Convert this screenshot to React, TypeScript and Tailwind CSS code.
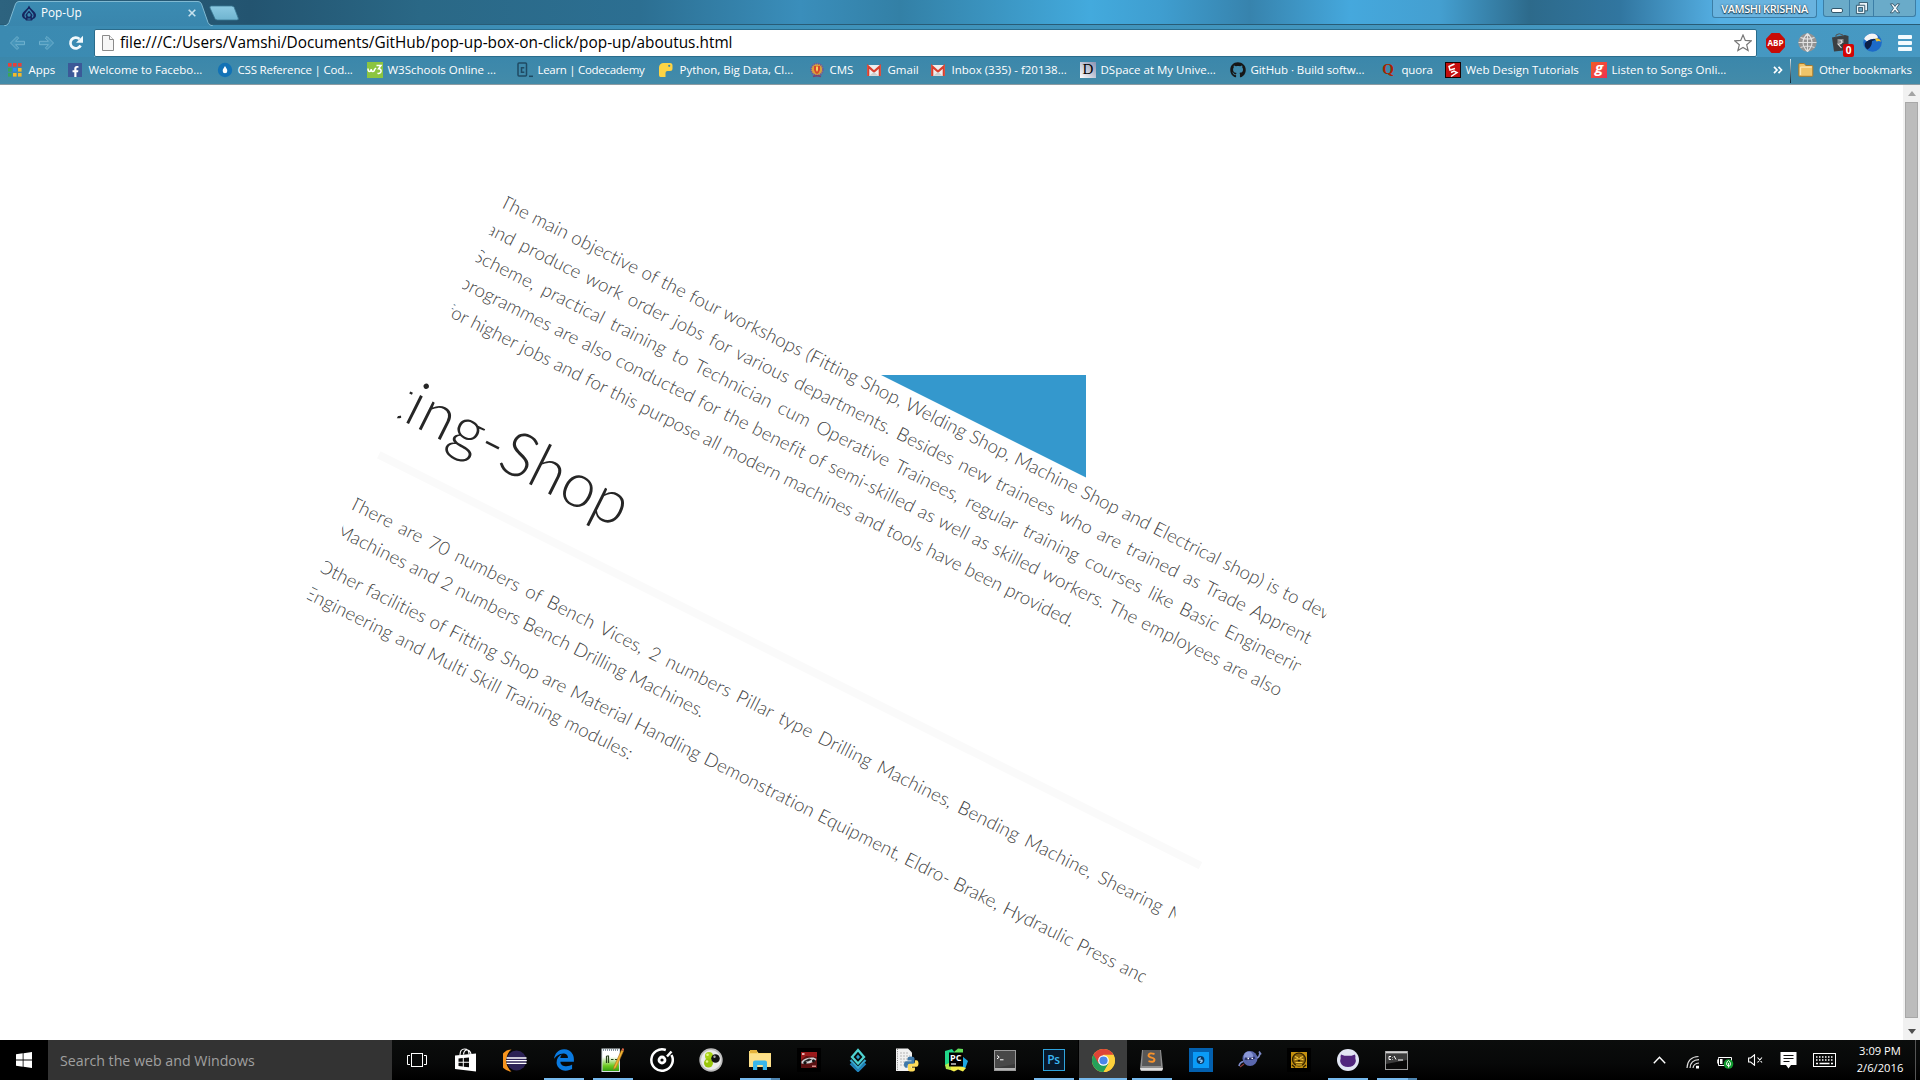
import type { ReactNode } from 'react';
import { FaFacebookF, FaGithub, FaEdgeLegacy } from 'react-icons/fa';

const UI = "font-['Open_Sans','Noto_Sans',sans-serif]";

/* ---------- Bookmark icons ---------- */

const AppsIcon = () => (
  <svg width="14" height="14" viewBox="0 0 14 14">
    {['#e8403a', '#e8403a', '#e8403a', '#3aa757', '#2f8df0', '#f4b92a', '#3aa757', '#f4b92a', '#f4b92a'].map((c, i) => (
      <rect key={i} x={(i % 3) * 5} y={Math.floor(i / 3) * 5} width="3.6" height="3.6" fill={c} />
    ))}
  </svg>
);
const FacebookIcon = () => (
  <span className="flex h-[14px] w-[14px] items-end justify-center bg-[#3b5998] text-white">
    <FaFacebookF size={11} />
  </span>
);
const CssIcon = () => (
  <svg width="16" height="16" viewBox="0 0 16 16">
    <circle cx="8" cy="8" r="7.2" fill="#1272b6" />
    <path d="M8 4c1 1.8 2.3 3 2.3 4.9a2.3 2.3 0 0 1-4.6 0C5.700 7 7 5.800 8 4z" fill="#fff" />
  </svg>
);
const W3Icon = () => (
  <svg width="16" height="16" viewBox="0 0 16 16">
    <rect width="16" height="16" fill="#8cc540" />
    <path d="M1 6.500q0 3 1.500 3T4.200 7q0 2.500 1.600 2.500T7.500 7.500L9 6M9.500 3.500H14l-2.500 3.300q3 .2 2.500 2.700-.7 2.500-3.500 1.700" fill="none" stroke="#fff" strokeWidth="1.500" />
  </svg>
);
const CodecademyIcon = () => (
  <svg width="16" height="16" viewBox="0 0 16 16" fill="none" stroke="#1f4a63">
    <rect x="1" y="1" width="8.500" height="13" rx="1" strokeWidth="1.500" />
    <path d="M7.300 5.800H4.500v4.500h2.800" strokeWidth="1.500" />
    <path d="M12 14.300h4" strokeWidth="1.500" />
  </svg>
);
const PythonYellowIcon = () => (
  <svg width="16" height="16" viewBox="0 0 16 16">
    <path d="M0 5.500A4.500 4.500 0 0 1 4.500 1H11q2.500 0 2.500 2.500v3Q13.500 9 11 9H8.500Q6.500 9 6.500 11v4H1.500Q0 15 0 13z" fill="#fdd443" />
    <circle cx="10.200" cy="3.800" r="1.100" fill="#3d88aa" />
  </svg>
);
const CmsIcon = () => (
  <svg width="16" height="16" viewBox="0 0 16 16">
    <circle cx="8" cy="7.500" r="6" fill="#d8a03a" stroke="#6b5aa0" strokeWidth="1.700" strokeDasharray="1.500 .7" />
    <path d="M5 4h6v4q-1 3-3 4-2-1-3-4z" fill="#d4472c" />
    <path d="M7 4.500h2V8L8 10 7 8z" fill="#f7d060" />
    <path d="M4 14.500q4-1.500 8 0" stroke="#7d3f6a" strokeWidth="1.500" fill="none" />
  </svg>
);
const GmailIcon = () => (
  <svg width="14" height="16" viewBox="0 0 14 16">
    <rect y="3" width="14" height="11" rx="1" fill="#eee" />
    <path d="M1.200 14V4.500L7 9.500l5.800-5V14" fill="none" stroke="#d9402f" strokeWidth="2.200" />
    <path d="M2.300 13.800 7 10l4.700 3.800z" fill="#cfcfcf" />
  </svg>
);
const DspaceIcon = () => (
  <span className="flex h-4 w-4 items-center justify-center bg-gradient-to-tr from-white to-[#8b92b0] font-['Liberation_Serif',serif] text-[15px] leading-none text-black">D</span>
);
const QuoraIcon = () => (
  <span className="flex h-4 w-[14px] items-center justify-center font-['Liberation_Serif',serif] text-[15px] font-bold leading-none text-[#a82400]">Q</span>
);
const WebDesignIcon = () => (
  <svg width="16" height="16" viewBox="0 0 16 16">
    <rect x=".5" y=".5" width="15" height="15" fill="#c40d0d" stroke="#190000" />
    <path d="M9.500 2 4 4.500l1 3.500 5-1.500M6 10.500l3-1.500 3 1.500-6 4" fill="none" stroke="#fff" strokeWidth="1.500" />
  </svg>
);
const GaanaIcon = () => (
  <span className="flex h-4 w-4 items-center justify-center bg-gradient-to-br from-[#f15a22] to-[#ee2c4f] pb-1 font-['Open_Sans',sans-serif] text-[15px] font-bold italic leading-none text-white">g</span>
);
const FolderIcon = () => (
  <svg width="16" height="16" viewBox="0 0 16 16">
    <path d="M.8 13.500V2.500q0-1 1-1h4.500l1.500 2h6q1 0 1 1v9q0 .8-.8.8H1.600q-.8 0-.8-.8z" fill="#f0c469" stroke="#a77a2b" />
    <path d="M2.500 13V6q0-.8.8-.8h10.500" fill="none" stroke="#fbe6b3" strokeWidth="1.300" />
  </svg>
);

type Bookmark = { label: string; icon: ReactNode; slot: string; track?: string };
const bookmarks: Bookmark[] = [
  { label: 'Apps', icon: <AppsIcon />, slot: 'w-[60px]' },
  { label: 'Welcome to Facebo...', icon: <FacebookIcon />, slot: 'w-[149px]' },
  { label: 'CSS Reference | Cod...', icon: <CssIcon />, slot: 'w-[150px]', track: 'tracking-[-0.2px]' },
  { label: 'W3Schools Online ...', icon: <W3Icon />, slot: 'w-[150px]' },
  { label: 'Learn | Codecademy', icon: <CodecademyIcon />, slot: 'w-[142px]', track: 'tracking-[-0.3px]' },
  { label: 'Python, Big Data, Cl...', icon: <PythonYellowIcon />, slot: 'w-[150px]' },
  { label: 'CMS', icon: <CmsIcon />, slot: 'w-[58px]' },
  { label: 'Gmail', icon: <GmailIcon />, slot: 'w-[64px]' },
  { label: 'Inbox (335) - f20138...', icon: <GmailIcon />, slot: 'w-[149px]' },
  { label: 'DSpace at My Unive...', icon: <DspaceIcon />, slot: 'w-[150px]' },
  { label: 'GitHub · Build softw...', icon: <FaGithub size={16} color="#161616" />, slot: 'w-[151px]', track: 'tracking-[-0.07px]' },
  { label: 'quora', icon: <QuoraIcon />, slot: 'w-[64px]', track: 'tracking-[-0.2px]' },
  { label: 'Web Design Tutorials', icon: <WebDesignIcon />, slot: 'w-[146px]' },
  { label: 'Listen to Songs Onli...', icon: <GaanaIcon />, slot: 'w-[182px]' },
];

/* ---------- Browser chrome ---------- */

const TabStrip = () => (
  <div className="flex h-[25px] items-start bg-[linear-gradient(90deg,#2d637f_0px,#235470_250px,#2a6886_420px,#2c6f92_640px,#3a8ebb_800px,#3380a6_900px,#43aadd_1090px,#3f9ed0_1160px,#3783ad_1250px,#45a8dd_1350px,#449fd0_1440px,#2d6a8b_1530px,#3176a0_1620px,#55b0e4_1720px,#5bb2e3_1920px)] shadow-[inset_0_-1px_0_#285c76]">
    <div className="relative h-[25px] w-[205px]">
      <svg className="absolute left-0 top-0" width="245" height="26" viewBox="0 0 245 26">
        <defs>
          <linearGradient id="tab" x1="0" y1="0" x2="0" y2="1">
            <stop offset="0" stopColor="#3b8bb2" />
            <stop offset="1" stopColor="#3986ad" />
          </linearGradient>
          <linearGradient id="newtab" x1="0" y1="0" x2="0" y2="1">
            <stop offset="0" stopColor="#8cc9e2" />
            <stop offset="1" stopColor="#6fb4d0" />
          </linearGradient>
        </defs>
        <path d="M4 26q4-.5 5-3.500L15.500 4q1-2.500 3.500-2.500h179q2.500 0 3.500 2.500l6.500 18.500q1 3 5 3.500" fill="url(#tab)" stroke="#7fb9d2" />
        <path d="M210 8q-.7-2 1.500-2h20q2 0 2.700 1.500l4 10.500q.7 2-1.500 2h-19q-2 0-2.800-1.500z" fill="url(#newtab)" stroke="#3a7894" strokeWidth=".8" />
      </svg>
      <div className="relative flex h-[25px] items-center pl-[22px] text-white">
        <svg width="14" height="16" viewBox="0 0 14 16">
          <path d="M7 .5q1 2.500 3.500 4.500Q14 8 14 10q0 3-3 4l-1 1.500H4L3 14q-3-1-3-4 0-2 3.500-5Q6 3 7 .5z" fill="#16275f" />
          <path d="M7 4.500 3.300 9q-1 2 .7 3.500M7 4.500 10.700 9q1 2-.7 3.500M7 8v2M5.500 14h3" stroke="#3b8ab1" strokeWidth="1.200" fill="none" />
          <circle cx="7" cy="10" r="1.700" fill="#3b8ab1" />
        </svg>
        <span className="ml-[5px] text-[11.7px]">Pop-Up</span>
        <svg className="ml-[106px]" width="8" height="8" viewBox="0 0 8 8" stroke="#c6e2ee" strokeWidth="1.600">
          <path d="M.7.7l6.600 6.600M7.300.7.7 7.300" />
        </svg>
      </div>
    </div>
    <div className="ml-auto mr-[6px] h-[18px] w-[105px] rounded-b-[3px] border border-t-0 border-[#3c7ea6] bg-[#69b3df] text-center text-[10.900px] font-semibold leading-[18px] tracking-[-0.35px] text-white [text-shadow:0_0_2px_#1c3a4c,0_1px_1px_#1c3a4c]">
      VAMSHI KRISHNA
    </div>
    <div className="mr-[4px] flex h-[17px] w-[93px] divide-x divide-[#3c7ea6] rounded-b-[3px] border border-t-0 border-[#3c7ea6] bg-[#6aabc9]">
      <div className="flex w-[26px] items-center justify-center pt-1">
        <div className="h-[5px] w-3 rounded-[2px] border border-[#31566b] bg-white" />
      </div>
      <div className="-ml-px flex w-[25px] items-center justify-center">
        <svg width="13" height="13" viewBox="0 0 14 14" stroke="#31566b" fill="#e9f3f8">
          <path d="M4.500.5h9v9h-3v3h-9v-9h3z" />
          <path d="M4.500 3.500h6v6" fill="none" />
          <rect x="4" y="6" width="4" height="4" fill="#6aabc9" />
        </svg>
      </div>
      <div className="flex flex-1 items-center justify-center">
        <svg width="12" height="11" viewBox="0 0 12 11">
          <path d="M1.500.8h2.600L6 3.400 7.900.8h2.600L7.500 5.300l3.200 4.500H8L6 7.200 4 9.800H1.300l3.200-4.500z" fill="#f4f9fc" stroke="#31566b" strokeWidth=".9" />
        </svg>
      </div>
    </div>
  </div>
);

const Arrow = ({ flip }: { flip?: boolean }) => (
  <svg className={flip ? '-scale-x-100' : ''} width="17" height="16" viewBox="0 0 17 16">
    <path d="M8 1.500 1.500 8 8 14.500l1.600-1.600L6.500 9.700h9V6.300h-9l3.100-3.200z" fill="#4796bb" stroke="#6fb0cd" />
  </svg>
);

const Toolbar = () => (
  <div className="flex h-8 items-center bg-[linear-gradient(90deg,#3b8ab1,#3f93bb_50%,#4799c3)] pt-[3px]">
    <div className="flex w-[94px] items-center pl-[9px]">
      <Arrow />
      <span className="ml-[12px] flex"><Arrow flip /></span>
      <svg className="ml-[13px]" width="16" height="16" viewBox="0 0 16 16">
        <path d="M12.600 10.500A5.400 5.400 0 1 1 11.500 4" fill="none" stroke="#f2f9fc" strokeWidth="2.700" />
        <path d="M15 .8v7H8z" fill="#f2f9fc" />
      </svg>
    </div>
    <div className="flex h-[28px] w-[1663px] items-center rounded-[2px] border border-[#2a6c8c] bg-white pl-[7px] pr-1 shadow-[0_1px_0_#7db8d2]">
      <svg width="12" height="16" viewBox="0 0 12 16" fill="#f7f7f7" stroke="#8b8b8b">
        <path d="M.5.5h7l4 4v11H.5z" />
        <path d="M7.500.5v4h4" />
      </svg>
      <span className="ml-[6px] text-[15.38px] text-black">file:///C:/Users/Vamshi/Documents/GitHub/pop-up-box-on-click/pop-up/aboutus.html</span>
      <svg className="ml-auto" width="18" height="18" viewBox="0 0 18 18">
        <path d="M9 1l2.300 5.400 5.900.5-4.500 3.900 1.400 5.700L9 13.500l-5.100 3 1.400-5.700L.8 6.900l5.900-.5z" fill="#fff" stroke="#777" strokeWidth="1.200" />
      </svg>
    </div>
    <div className="ml-[9px] flex flex-1 items-center">
      <svg width="19" height="20" viewBox="0 0 19 20">
        <path d="M5.500 0h8L19 6v8l-5.500 6h-8L0 14V6z" fill="#c80b06" />
        <text x="9.500" y="13.300" fontSize="8.500" fontWeight="700" fill="#fff" textAnchor="middle" fontFamily="Open Sans" textLength="16" lengthAdjust="spacingAndGlyphs">ABP</text>
      </svg>
      <svg className="ml-[13px]" width="19" height="19" viewBox="0 0 19 19">
        <circle cx="9.500" cy="9.500" r="9.200" fill="#929292" />
        <path d="M9.500.5v18M.5 9.500h18M2.500 4.500q7 3 14 0M2.500 14.500q7-3 14 0M9.500.5q-9 9 0 18M9.500.5q9 9 0 18" fill="none" stroke="#e2e2e2" strokeWidth="1.100" />
      </svg>
      <div className="relative ml-[15px] h-[19px] w-[17px]">
        <svg width="17" height="19" viewBox="0 0 17 19">
          <path d="M0 4.500 13 2l3.500 1v14L2 18.500z" fill="#3b3f42" />
          <path d="M4 4.500V2q3-2.500 7 0v1.500" fill="none" stroke="#555" />
          <path d="M5.500 7h6M5.500 9h6M6 7q4 0 4 2t-4 2l3.500 4" fill="none" stroke="#ddd" strokeWidth="1.100" />
        </svg>
        <span className="absolute -bottom-[5px] left-[11px] h-[13px] w-[11px] rounded-[2px] bg-[#d40404] text-center text-[10px] font-bold leading-[13px] text-white">0</span>
      </div>
      <svg className="ml-[14px]" width="19" height="19" viewBox="0 0 19 19">
        <circle cx="9.500" cy="9.500" r="9.300" fill="#1d6ac9" />
        <path d="M1 6q2-5 8-5.500 5 0 6 4l-2 1.500q-5-1-9 2.500z" fill="#f5f5f5" />
        <path d="M2 10q4-4.500 11-4-1 1.500-4 2Q9 14 4.500 16.500 1 14 2 10z" fill="#0d2048" />
        <path d="M12 5.500q4-1 6 3-2-.8-4.500 0z" fill="#f2c230" />
      </svg>
      <svg className="ml-[16px]" width="14" height="16" viewBox="0 0 14 16" fill="#f4fbfe">
        <rect y="0" width="14" height="4" rx="1" />
        <rect y="6" width="14" height="4" rx="1" />
        <rect y="12" width="14" height="4" rx="1" />
      </svg>
    </div>
  </div>
);

const BookmarksBar = () => (
  <div className="flex h-[28px] items-center border-b border-[#8c9ba2] bg-[linear-gradient(180deg,#3b87ab,#438ba9)] pb-[2px] pl-2 text-[11.5px] text-white">
    {bookmarks.map((b) => (
      <div key={b.label} className={`flex shrink-0 items-center whitespace-nowrap ${b.slot}`}>
        <span className="flex w-4 shrink-0">{b.icon}</span>
        <span className={`ml-[4.500px] ${b.track ?? ''}`}>{b.label}</span>
      </div>
    ))}
    <svg width="10" height="8" viewBox="0 0 10 8" fill="none" stroke="#fff" strokeWidth="1.700">
      <path d="M1 .8 4 4 1 7.200M5.500.8l3 3.200-3 3.200" />
    </svg>
    <div className="ml-[7px] mt-[2px] h-[24px] w-px bg-gradient-to-b from-white/80 to-[#0d2430]" />
    <span className="ml-[7px] flex"><FolderIcon /></span>
    <span className="ml-[5px] tracking-[-0.1px] whitespace-nowrap">Other bookmarks</span>
  </div>
);

/* ---------- Page ---------- */

const Line = ({ w, children }: { w: string; children: string }) => (
  <div className={`whitespace-nowrap text-justify [text-align-last:justify] ${w}`}>{children}</div>
);
const LastLine = ({ track, children }: { track: string; children: string }) => (
  <div className={`whitespace-nowrap ${track}`}>{children}</div>
);

const Page = () => (
  <div className="relative flex-1 overflow-hidden bg-white">
    <div className="absolute left-[834px] top-[290px] h-[110px] w-[252px] bg-[#3498cd]" />
    <div className="absolute left-[510.9px] top-[105.1px] h-[500px] w-[919px] origin-top-left rotate-[26.565deg] overflow-hidden bg-white font-['Lato',sans-serif] text-[18.6px] font-light leading-[30.1px] text-[#3f3f3f] [font-variant-ligatures:none]">
      <div className="-ml-1 -mt-[1.8px] tracking-[0.14px]">
        <Line w="w-[926px] tracking-[0.07px]">The main objective of the four workshops (Fitting Shop, Welding Shop, Machine Shop and Electrical shop) is to dev</Line>
        <Line w="w-[920px]">and produce work order jobs for various departments. Besides new trainees who are trained as Trade Apprent</Line>
        <Line w="w-[926.500px]">Scheme, practical training to Technician cum Operative Trainees, regular training courses like Basic Engineerin</Line>
        <Line w="w-[917px]">programmes are also conducted for the benefit of semi-skilled as well as skilled workers. The employees are also</Line>
        <LastLine track="tracking-[0.04px]">for higher jobs and for this purpose all modern machines and tools have been provided.</LastLine>
      </div>
      <h1 className="mt-[49.500px] flex w-[247px] justify-end whitespace-nowrap text-[62px] leading-[66px] tracking-[0.5px] text-[#262626]">
        <span>Fitting-Shop</span>
      </h1>
      <div className="mt-[27.8px] h-2 bg-[#fafafa]" />
      <div className="-ml-1 mt-[35px] tracking-[0.2px]">
        <Line w="w-[932.500px]">There are 70 numbers of Bench Vices, 2 numbers Pillar type Drilling Machines, Bending Machine, Shearing M</Line>
        <LastLine track="tracking-[0.115px]">Machines and 2 numbers Bench Drilling Machines.</LastLine>
      </div>
      <div className="-ml-1 mt-[10px]">
        <Line w="w-[926.500px] tracking-[0.11px]">Other facilities of Fitting Shop are Material Handling Demonstration Equipment, Eldro- Brake, Hydraulic Press and</Line>
        <LastLine track="tracking-[0.21px]">Engineering and Multi Skill Training modules:</LastLine>
      </div>
    </div>
  </div>
);

const Scrollbar = () => (
  <div className="flex w-[17px] flex-col items-center bg-[#f1f1f1]">
    <div className="flex h-[17px] items-center">
      <svg width="8" height="5" viewBox="0 0 8 5" fill="#a3a3a3"><path d="M4 0l4 5H0z" /></svg>
    </div>
    <div className="w-[13px] flex-1 border border-[#a8a8a8] bg-[#bcbcbc]" />
    <div className="flex h-[22px] items-center pt-[4px]">
      <svg width="8" height="5" viewBox="0 0 8 5" fill="#505050"><path d="M4 5l4-5H0z" /></svg>
    </div>
  </div>
);

/* ---------- Taskbar ---------- */

const TaskView = () => (
  <svg width="20" height="15" viewBox="0 0 20 15" fill="none" stroke="#fff"><rect x="4.500" y=".5" width="11" height="13" /><path d="M3 2.500H.5v9H3M17 2.500h2.500v9H17" /></svg>
);
const Store = () => (
  <svg width="21" height="24" viewBox="0 0 21 24">
    <path d="M0 7.500 21 5.500v18L0 21z" fill="#fff" />
    <path d="M5 7q0-6 4.500-6T14 6M8.500 6.500Q9 2 12 2t4 4" fill="none" stroke="#fff" strokeWidth="1.200" />
    <path d="M3.500 10.500l4.300-.4v3.700H3.500zM8.800 10l5.200-.5v4.300H8.800zM3.500 14.800h4.300v3.800l-4.300-.5zM8.800 14.800H14v4.500l-5.200-.6z" fill="#0a0a0a" />
  </svg>
);
const Eclipse = () => (
  <svg width="24" height="23" viewBox="0 0 24 23">
    <path d="M8.500.5A11 11 0 0 0 8.500 22.500 14 14 0 0 1 8.500.5z" fill="#f7941e" />
    <circle cx="13.500" cy="11.500" r="10" fill="#2c2255" />
    <path d="M3.500 9h20M3.200 11.700h20.600M3.500 14.400h20" stroke="#fff" strokeWidth="1.300" />
  </svg>
);
const NotepadPP = () => (
  <svg width="23" height="24" viewBox="0 0 23 24">
    <defs><linearGradient id="npp" x1="0" y1="0" x2="0" y2="1"><stop offset=".35" stopColor="#fff" /><stop offset=".75" stopColor="#6cc820" /><stop offset="1" stopColor="#2e9a10" /></linearGradient></defs>
    <rect x="1" y="1" width="17.500" height="22.500" fill="url(#npp)" stroke="#d7dfe2" />
    <path d="M2 2h16" stroke="#8894a0" strokeWidth="2" strokeDasharray="1 1" />
    <path d="M5.500 8v7M5.500 8h2v7M10 11.500h2.500M14 11.500h2.500" stroke="#274018" strokeWidth="1.200" fill="none" />
    <path d="M20.500 2 13 18.500l-.5 3 2.500-1.800L22.500 3z" fill="#f2b632" stroke="#a8691c" strokeWidth=".6" />
    <path d="M20.500 2l1-2 2 1-1 2z" fill="#d86444" />
  </svg>
);
const Groove = () => (
  <svg width="24" height="24" viewBox="0 0 24 24" fill="none" stroke="#fff">
    <path d="M15.800 2A10.700 10.700 0 1 0 21.500 7" strokeWidth="2.500" />
    <circle cx="12" cy="12" r="3" strokeWidth="2.800" />
    <path d="M17 8.500 21.500 3.500" strokeWidth="2.500" />
  </svg>
);
const Balls = () => (
  <svg width="24" height="24" viewBox="0 0 24 24">
    <circle cx="12" cy="12" r="11.700" fill="#bdbdbd" />
    <circle cx="12" cy="12" r="10" fill="#eaeaea" />
    <circle cx="10" cy="8" r="4" fill="#a8d214" /><circle cx="9.500" cy="15" r="4.500" fill="#98c60a" />
    <circle cx="16.500" cy="10.500" r="4.300" fill="#111" /><circle cx="15.500" cy="8.800" r="1.200" fill="#aaa" />
    <circle cx="8.500" cy="6.800" r="1.300" fill="#e6f78a" /><circle cx="8" cy="13.500" r="1.300" fill="#e6f78a" />
  </svg>
);
const Explorer = () => (
  <svg width="22" height="20" viewBox="0 0 22 20">
    <path d="M0 1h8l1.500 2H22v14H0z" fill="#f9d873" /><path d="M1 0h7v3H1z" fill="#e5b23c" /><path d="M0 4h22v13H0z" fill="#fde08a" />
    <path d="M4 20v-7.500q0-2 2-2h10q2 0 2 2V20h-4.200v-5H8.200v5z" fill="#38b6ea" />
  </svg>
);
const RacingGame = () => (
  <svg width="24" height="24" viewBox="0 0 24 24">
    <rect width="24" height="24" fill="#000" /><rect x="4" y="4" width="16" height="16" fill="#5a1011" />
    <path d="M4 4h16v5L9 8 4 12z" fill="#9a1a1b" /><path d="M4.500 13.500q4-4.500 12-4l3 1.500-2 2.500q-6 3-13 2z" fill="#d2d5d8" /><path d="M7 13l5-2.500 3 1-4 2z" fill="#222" />
    <circle cx="8" cy="14.800" r="1.700" fill="#151515" /><circle cx="16.500" cy="12.800" r="1.600" fill="#151515" /><path d="M15 17.500h4v1.500h-4z" fill="#d98a8a" /><path d="M5 5h2.500v2H5z" fill="#e6b0b0" />
  </svg>
);
const Layers = () => (
  <svg width="18" height="24" viewBox="0 0 18 24" fill="none" strokeWidth="2.300">
    <path d="M9 2l6 7-6 6.500L3 9z" stroke="#4fd3d1" /><path d="M9 6.500 11 9l-2 2.300L7 9z" fill="#2a9fc9" stroke="none" />
    <path d="M1.500 12 9 20l7.500-8" stroke="#36a9cf" /><path d="M1.500 15.500 9 23l7.500-7.500" stroke="#2184bd" />
  </svg>
);
const PyPaths = () => (
  <>
    <path d="M7 0Q3.500 0 3.500 2v2h4v.8H2Q0 5 0 8t2 3.200h1.500V9.500q0-1.800 2-1.800H9q1.500 0 1.500-1.500V2Q10.500 0 7 0z" fill="#3f78a8" />
    <path d="M7.500 15q3.500 0 3.500-2v-2H7v-.8h5.500q2-.2 2-3.200t-2-3.200H11v1.700q0 1.800-2 1.800H5.500Q4 7.300 4 8.800V13q0 2 3.500 2z" fill="#ffdc5a" />
  </>
);
const PythonFile = () => (
  <svg width="24" height="24" viewBox="0 0 24 24">
    <path d="M1 .5h12l4 4V23H1z" fill="#f1f1f1" /><path d="M2.500 1v22" stroke="#888" strokeDasharray="1 1.200" /><path d="M5 5h9M5 8h10M5 11h8M5 14h6M5 17h5" stroke="#b5b5b5" strokeDasharray="2 1" />
    <g transform="translate(9 8.500)"><PyPaths /></g>
  </svg>
);
const PyCharm = () => (
  <svg width="24" height="24" viewBox="0 0 24 24">
    <path d="M1 3 8 1l3 4-4 17-6-5z" fill="#21d789" /><path d="M10 4l4-3.500 5 .5v8l-8 2z" fill="#63e05a" /><path d="M18 8l6 5-3 8-9-2z" fill="#1ca6e0" /><path d="M2 20l8-4 12 4-3 3.500-5-2-4 2z" fill="#f4ee4a" /><path d="M1 17l6-3v8l-5-1z" fill="#b4e84e" />
    <rect x="5" y="4.500" width="14" height="14" fill="#000" />
    <text x="6" y="12.700" fontFamily="Open Sans" fontWeight="700" fontSize="9" fill="#fff">PC</text><path d="M7 16h5" stroke="#fff" strokeWidth="1.200" />
  </svg>
);
const Terminal = () => (
  <svg width="22" height="21" viewBox="0 0 22 21">
    <rect x=".5" y=".5" width="21" height="20" fill="#3a3a3a" stroke="#9a9a9a" /><path d="M1 1h20v13L1 18z" fill="#4e4e4e" opacity=".7" /><path d="M1 18h20v2H1z" fill="#b3b3b3" />
    <path d="M3 5.500l2.200 1.700L3 8.900M6 9.800h3.500" fill="none" stroke="#fff" />
  </svg>
);
const Photoshop = () => (
  <span className="flex h-[22px] w-[22px] items-center justify-center border-[1.500px] border-[#2fa3dc] bg-[#08192b] font-['Open_Sans',sans-serif] text-[12px] font-semibold leading-none tracking-[-0.3px] text-[#3ab7f2]">Ps</span>
);
const ChromeIcon = () => (
  <svg width="23" height="23" viewBox="0 0 24 24">
    <circle cx="12" cy="12" r="12" fill="#fdd03b" />
    <path d="M12 12 1.600 6A12 12 0 0 0 12 24l5.200-9z" fill="#25a05a" />
    <path d="M1.600 6A12 12 0 0 1 22.400 6H12L6.800 15z" fill="#de4437" />
    <path d="M12 24l5.200-9H12l-5.200 0z" fill="#25a05a" /><path d="M22.400 6.300A12 12 0 0 1 12 24l5.200-9L12 6.300z" fill="#fdd03b" />
    <circle cx="12" cy="12" r="5.600" fill="#fff" /><circle cx="12" cy="12" r="4.300" fill="#4a86e8" />
  </svg>
);
const Sublime = () => (
  <svg width="23" height="21" viewBox="0 0 23 21">
    <path d="M2 0h19l2 19-1 2H1l-1-2z" fill="#8f8f8f" /><path d="M0 18h23l-1 2.500H1z" fill="#dedede" /><path d="M3 0h17l1 16H2z" fill="#575757" />
    <path d="M14.500 4Q8.800 2.300 8.500 5.300q0 1.800 3 2.300t3 2.400q-.5 2.800-6 1.200" fill="none" stroke="#f7922b" strokeWidth="1.900" />
  </svg>
);
const BlueSquare = () => (
  <svg width="24" height="24" viewBox="0 0 24 24">
    <rect width="24" height="24" fill="#0360ae" /><rect x="4" y="4" width="16" height="16" fill="#0a9bf7" /><circle cx="11.500" cy="12" r="3.900" fill="#0b3561" />
    <path d="M12 9.800q-3 .5-2 2l3 .5q.5 1.800-2 2" fill="none" stroke="#9bd1fa" strokeWidth="1.300" />
  </svg>
);
const Ninja = () => (
  <svg width="24" height="20" viewBox="0 0 24 20">
    <circle cx="12" cy="8.500" r="7.500" fill="#5a67ad" /><circle cx="10.500" cy="6" r="4.500" fill="#8a97d6" />
    <path d="M7 8.500q5 1.500 10-1" stroke="#2b3266" strokeWidth="2.400" fill="none" /><path d="M9.500 8.500h1.500M13.500 8.300H15" stroke="#fff" strokeWidth="1.300" />
    <path d="M1 16q1-4 4.500-4.500M19 8q2.500-1 3-5M21 1.500l2 3" stroke="#7f8cc9" strokeWidth="1.700" fill="none" />
    <path d="M2 17l4-3" stroke="#8d3a3a" strokeWidth="1.200" />
  </svg>
);
const Lion = () => (
  <svg width="24" height="24" viewBox="0 0 24 24">
    <rect width="24" height="24" fill="#000" /><rect x="4" y="4" width="16" height="16" fill="#c4900f" />
    <circle cx="12" cy="11.500" r="6.500" fill="#8a620a" stroke="#2d1f02" strokeWidth="1.200" />
    <path d="M8 8.500l3 1.200M16 8.500l-3 1.200M7.500 12q4.500-2.500 9 0M8.500 14.500h7M9 17h6" fill="none" stroke="#f0c63c" strokeWidth="1.200" /><path d="M10.500 12h3l-1.500 2z" fill="#1d1401" />
    <path d="M5 17l3 2.500M19 17l-3 2.500" stroke="#2d1f02" strokeWidth="1.400" />
  </svg>
);
const GithubDesktop = () => (
  <svg width="22" height="22" viewBox="0 0 22 22">
    <circle cx="11" cy="11" r="11" fill="#e1e5f3" />
    <path d="M4 5.500l3.500 1.200h7L18 5.500q.8 2 .3 3.500 1 2.500 0 5Q16.500 18 11 18T3.700 14q-1-2.500 0-5Q3.200 7.500 4 5.500z" fill="#51267d" />
  </svg>
);
const Cmd = () => (
  <svg width="23" height="19" viewBox="0 0 23 19">
    <rect x=".5" y=".5" width="22" height="18" fill="#090909" stroke="#9c9c9c" /><path d="M1 1.500h21" stroke="#d2d2d2" strokeWidth="2" /><path d="M1 3h21v6L1 13z" fill="#3c3c3c" />
    <path d="M6 5.500H4v3h2M7.500 6v.5M7.500 8v.5M9 5l2 3.500M13 9h5" stroke="#fff" fill="none" />
  </svg>
);

type Task = { icon: ReactNode; run?: 'one' | 'many' | 'active' };
const tasks: Task[] = [
  { icon: <TaskView /> },
  { icon: <Store /> },
  { icon: <Eclipse /> },
  { icon: <FaEdgeLegacy size={22} color="#0a7ae0" />, run: 'one' },
  { icon: <NotepadPP />, run: 'one' },
  { icon: <Groove /> },
  { icon: <Balls /> },
  { icon: <Explorer />, run: 'many' },
  { icon: <RacingGame /> },
  { icon: <Layers /> },
  { icon: <PythonFile /> },
  { icon: <PyCharm /> },
  { icon: <Terminal /> },
  { icon: <Photoshop />, run: 'one' },
  { icon: <ChromeIcon />, run: 'active' },
  { icon: <Sublime />, run: 'one' },
  { icon: <BlueSquare /> },
  { icon: <Ninja /> },
  { icon: <Lion /> },
  { icon: <GithubDesktop />, run: 'one' },
  { icon: <Cmd />, run: 'many' },
];

const Taskbar = () => (
  <div className="flex h-10 bg-[linear-gradient(180deg,#0b0d0c,#070808_60%,#000)]">
    <div className="flex w-12 items-center justify-center bg-black">
      <svg width="16" height="16" viewBox="0 0 16 16" fill="#fff">
        <path d="M0 2.300 6.700 1.300v6.300H0zM7.500 1.200 16 0v7.600H7.500zM0 8.400h6.700v6.400L0 13.800zM7.500 8.400H16V16l-8.500-1.200z" />
      </svg>
    </div>
    <div className="flex w-[344px] items-center bg-[#333] pl-3 pt-px text-[14.2px] text-[#a0a0a0]">Search the web and Windows</div>
    {tasks.map((t, i) => (
      <div key={i} className={`flex w-[49px] flex-col items-center ${t.run === 'active' ? 'border-l border-black bg-[#3c3d3d]' : ''}`}>
        <div className="flex flex-1 items-center pt-[2px]">{t.icon}</div>
        {t.run ? (
          <div className={`flex h-[2px] bg-[#76b9ed] ${t.run === 'active' ? 'w-full' : 'w-10'}`}>
            {t.run === 'many' && <div className="ml-auto w-[9px] bg-[#4e85b0]" />}
          </div>
        ) : (
          <div className="h-[2px]" />
        )}
      </div>
    ))}
    <div className="ml-auto flex items-center">
      <svg width="13" height="8" viewBox="0 0 13 8" fill="none" stroke="#fff" strokeWidth="1.400"><path d="M.8 7.200 6.500 1.200l5.700 6" /></svg>
      <svg className="ml-[20px] mt-1" width="14" height="14" viewBox="0 0 14 14" fill="none" stroke="#ddd" strokeWidth="1.200">
        <path d="M1 13Q1.500 2 12.500 1.500M4 13q.5-8 9-8.300M7 13q.5-4.500 6-5" /><path d="M10 13.500v-2.700h3v2.700z" fill="#fff" stroke="none" />
      </svg>
      <svg className="ml-[17px] mt-1" width="17" height="14" viewBox="0 0 17 14">
        <path d="M1.500 3.500v-1h13v8h-13zM.7 4.500v4" fill="none" stroke="#fff" /><rect x="3" y="4" width="2.500" height="5" fill="#fff" />
        <circle cx="11.500" cy="9" r="4.800" fill="#119a2f" /><path d="M11.500 12.500V8M9.500 9q0-2.500 2-3.500 2 1 2 3.500t-2 2-2-2z" fill="none" stroke="#fff" strokeWidth=".9" />
      </svg>
      <svg className="ml-[14px]" width="15" height="12" viewBox="0 0 15 12" fill="none" stroke="#fff" strokeWidth="1.100"><path d="M.6 4h2L6.500.8v10.400L2.600 8h-2zM9.500 3.500l4.500 5M14 3.500l-4.500 5" /></svg>
      <svg className="ml-[17px]" width="17" height="17" viewBox="0 0 17 17"><path d="M.5 0h16v13H11l-2.500 3.500L6 13H.5z" fill="#fff" /><path d="M3.500 3.500h10M3.500 6.500h10M3.500 9.500h6" stroke="#111" strokeWidth="1.200" /></svg>
      <svg className="ml-[16px]" width="23" height="14" viewBox="0 0 23 14" fill="none" stroke="#fff"><rect x=".5" y=".5" width="22" height="13" /><path d="M3 4h17M3 7h17" strokeDasharray="1.500 1.500" strokeWidth="1.300" /><path d="M3 10.500h2M6.500 10.500h10M18 10.500h2" strokeWidth="1.300" /></svg>
      <div className="ml-[17px] w-[54px] pb-[3px] text-center text-[11.2px] leading-[17px] text-white">
        <div>3:09 PM</div>
        <div>2/6/2016</div>
      </div>
      <div className="ml-[8px] mr-[4px] h-10 w-px bg-[#555]" />
    </div>
  </div>
);

export default function App() {
  return (
    <div className={`flex h-[1080px] w-[1920px] flex-col overflow-hidden ${UI}`}>
      <TabStrip />
      <Toolbar />
      <BookmarksBar />
      <div className="flex min-h-0 flex-1">
        <Page />
        <Scrollbar />
      </div>
      <Taskbar />
    </div>
  );
}
